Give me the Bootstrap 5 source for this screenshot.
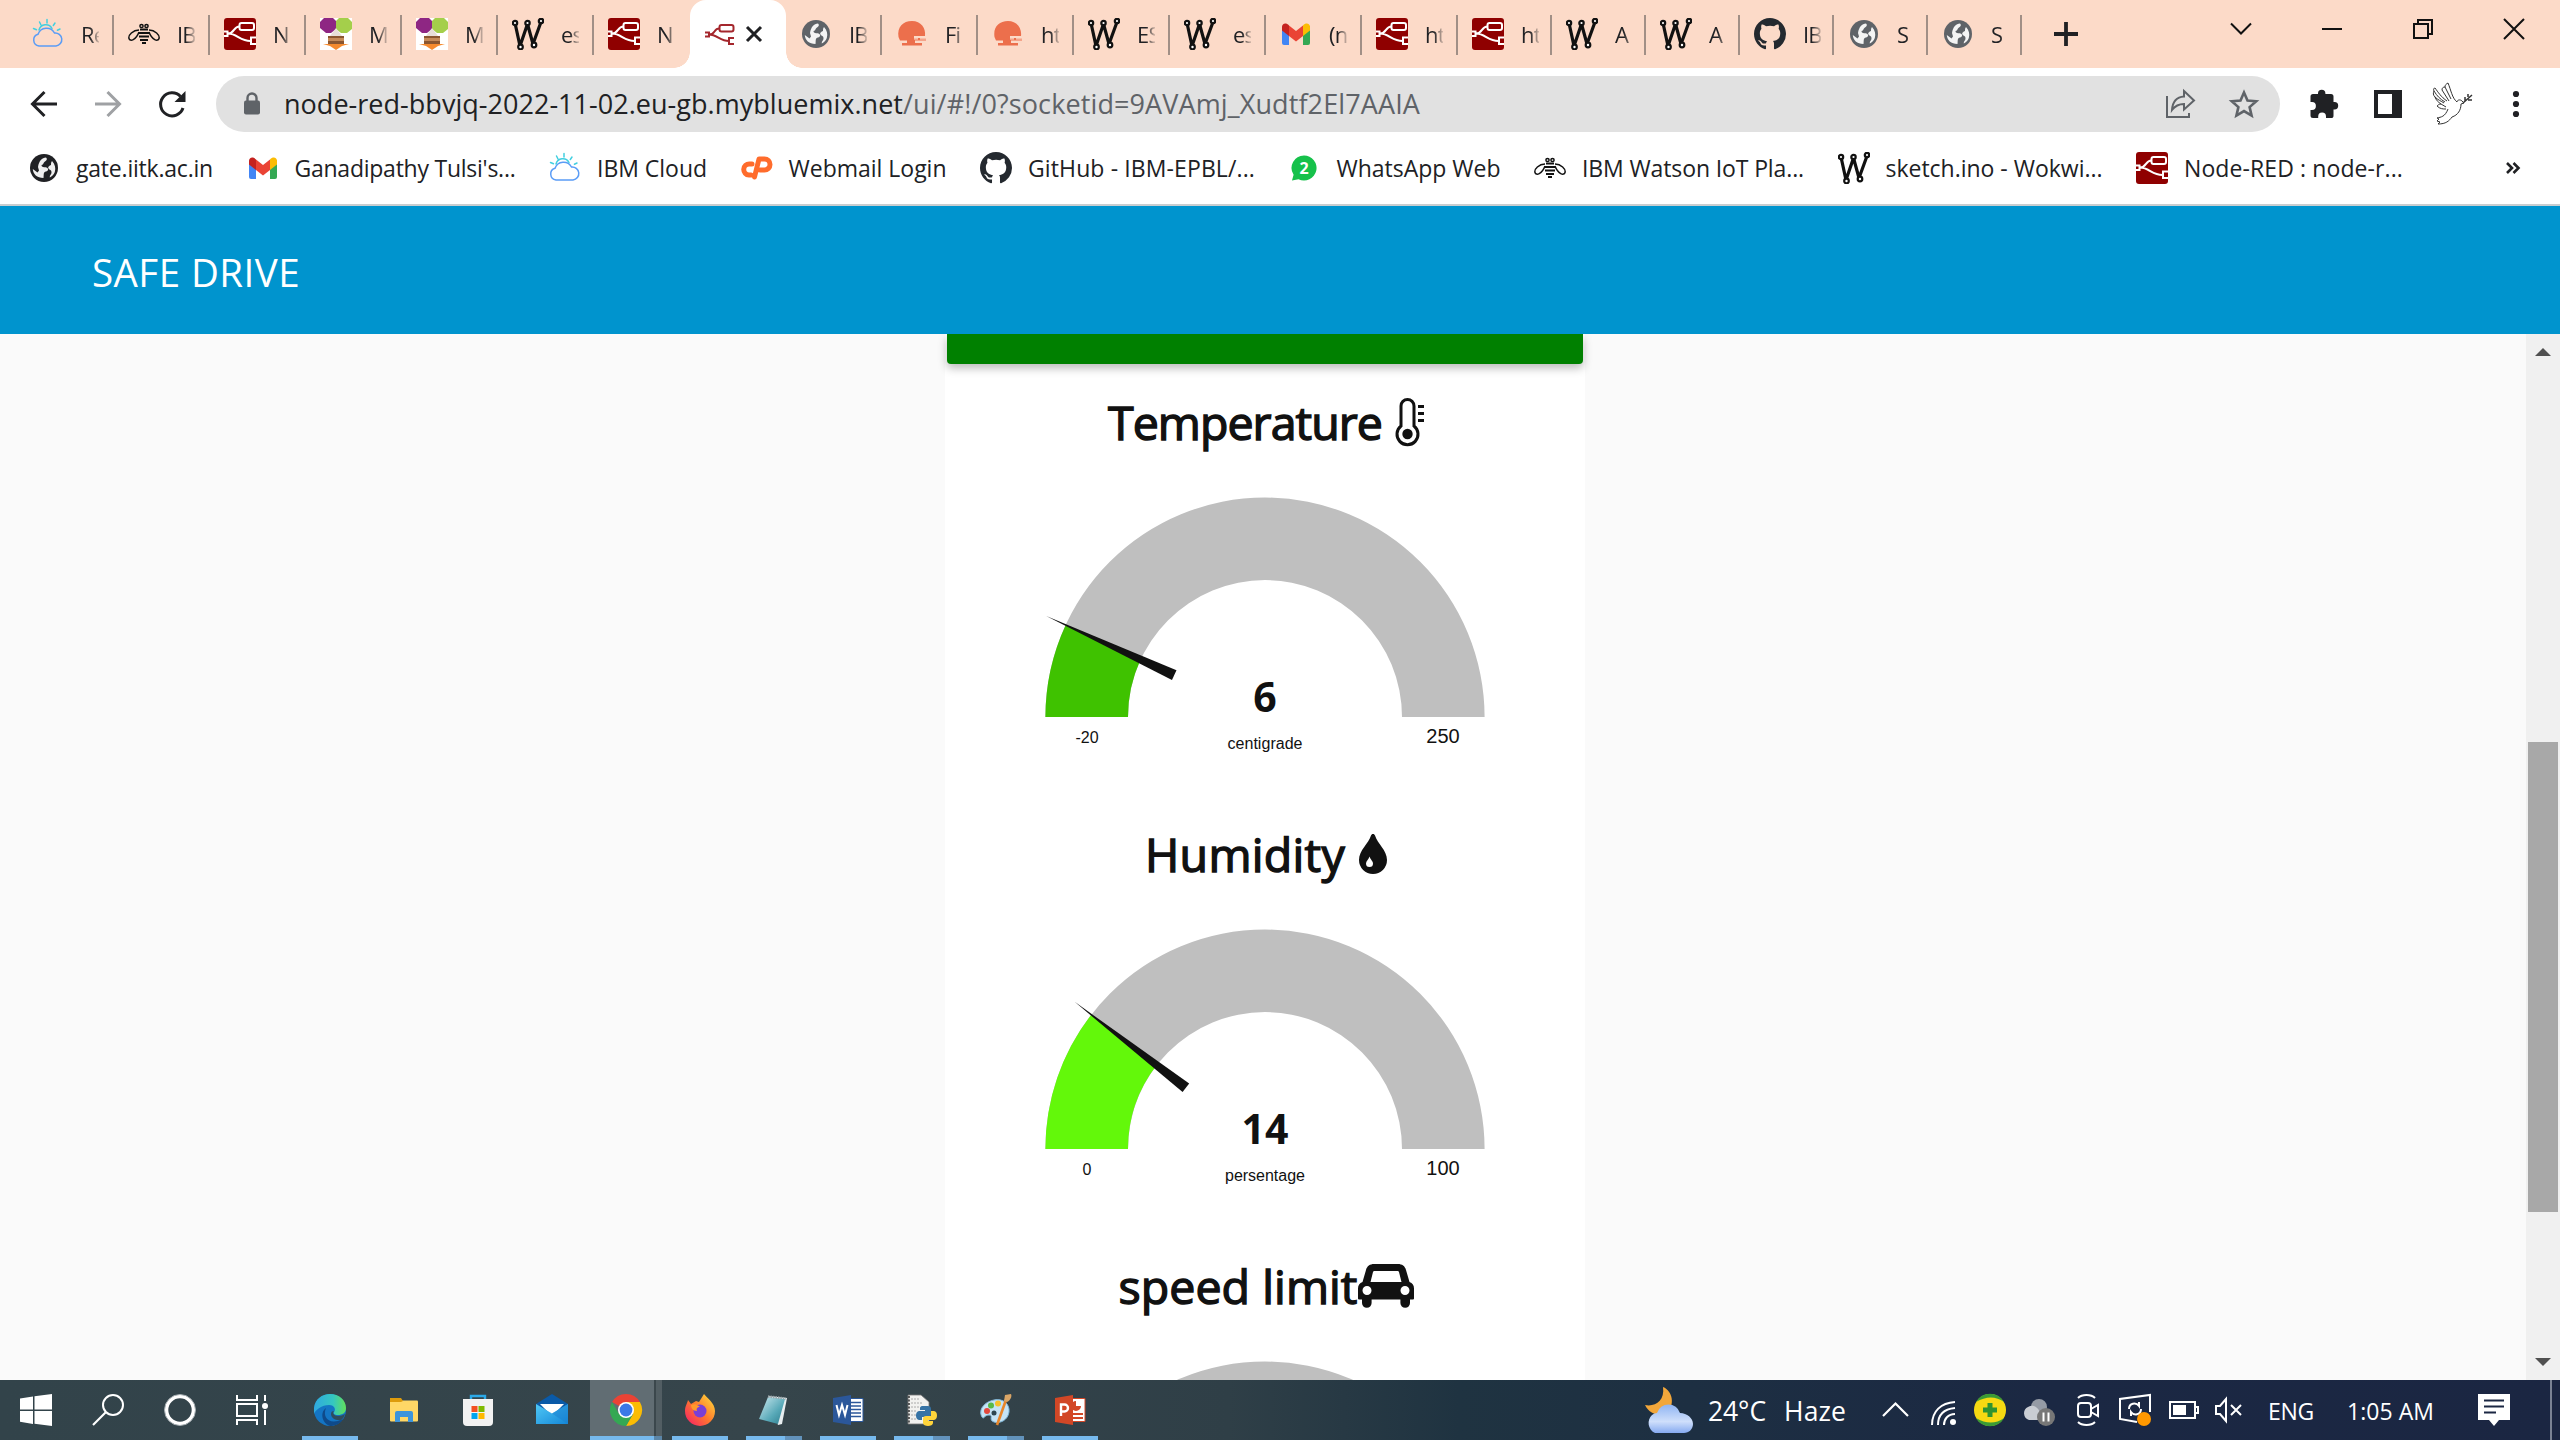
<!DOCTYPE html>
<html lang="en">
<head>
<meta charset="utf-8">
<title>SAFE DRIVE</title>
<link rel="stylesheet" href="https://cdn.jsdelivr.net/npm/bootstrap@5.3.0/dist/css/bootstrap.min.css">
<style>
  html, body { height: 100%; }
  body { font-family: "Open Sans", "Noto Sans", sans-serif; color: #202124; background: #fafafa; overflow: hidden; }
  svg { display: block; flex: none; overflow: visible; }
  .ico { width: 32px; height: 32px; }
  .fit { display: inline-block; white-space: nowrap; }

  /* tab strip */
  .tabstrip { height: 68px; background: #fcdac8; padding-left: 18px; }
  .tabcell { width: 96px; height: 68px; padding-left: 14px; gap: 17px; position: relative; }
  .tabcell.slim { width: 94px; }
  .tabcell::after { content: ""; position: absolute; right: 0; top: 15px; width: 2px; height: 40px; background: #a18f86; }
  .tabcell.nosep::after { display: none; }
  .tabtitle { width: 18px; overflow: hidden; white-space: nowrap; font-size: 22px; letter-spacing: -.8px; line-height: 34px; flex: none;
    -webkit-mask-image: linear-gradient(90deg, #000 50%, transparent 110%); mask-image: linear-gradient(90deg, #000 50%, transparent 110%); }
  .tabactive { width: 96px; height: 68px; background: #fff; border-radius: 16px 16px 0 0; position: relative; padding-left: 14px; gap: 10px; }
  .tabactive::before, .tabactive::after { content: ""; position: absolute; bottom: 0; width: 16px; height: 16px; }
  .tabactive::before { left: -16px; background: radial-gradient(circle at 0 0, transparent 15.5px, #fff 16px); }
  .tabactive::after { right: -16px; background: radial-gradient(circle at 100% 0, transparent 15.5px, #fff 16px); }
  .plusbox { margin-left: 32px; }
  .wincontrols { margin-left: auto; gap: 71px; padding: 0 36px 10px 0; }

  /* toolbar */
  .toolbar { height: 72px; background: #fff; padding: 0 28px; }
  .navicons { width: 188px; gap: 32px; flex: none; }
  .omnibox { width: 2064px; height: 56px; border-radius: 28px; background: #e1e1e1; padding: 0 20px; flex: none; }
  .urltext { font-size: 27px; line-height: 40px; margin-left: 16px; color: #5f6368; }
  .urltext b { font-weight: 400; color: #202124; }
  .boxicons { margin-left: auto; gap: 32px; }
  .extras { padding-left: 28px; gap: 32px; }
  .dove { margin: 0 -4px; }

  /* bookmarks */
  .bookmarks { height: 66px; background: #fff; border-bottom: 2px solid #c8cdd0; padding: 0 40px 9px 28px; font-size: 23px; line-height: 34px; }
  .bm { gap: 16px; margin-right: 33.5px; }
  .more { margin-left: auto; }

  /* dashboard */
  .dashhead { height: 128px; background: #0094ce; color: #fff; padding: 5px 0 0 92px; font-size: 38.5px; }
  .dashbody { height: 1046px; overflow: hidden; background: #fafafa; }
  .panelcol { width: 640px; background: #fff; margin-left: 945px; }
  .greenbar { height: 30px; margin: 0 2px; background: #008000; border-radius: 0 0 4px 4px; box-shadow: 0 4px 10px rgba(0,0,0,.28); }
  .gaugecard { height: 432px; padding-top: 24px; color: #111; }
  .gaugetitle { height: 69px; padding: 0 0 1px 2px; font-size: 46.5px; font-weight: 400; line-height: 66px; }
  .gaugetitle .fit { -webkit-text-stroke: 1.4px #111; }
  .thermo { margin-left: 13px; }
  .drop { margin-left: 14px; }
  .dial text { font-family: "Liberation Sans", sans-serif; fill: #111; text-anchor: middle; }
  .dial .reading { font-family: "Open Sans", "Noto Sans", sans-serif; font-weight: 700; font-size: 41px; }
  .scroller { width: 34px; background: #f0f0f0; margin-left: auto; padding: 14px 2px; }
  .thumb { height: 470px; background: #a8a8a8; margin-top: 386px; }

  /* taskbar */
  .taskbar { height: 60px; background: linear-gradient(90deg, #32434a 0, #36454b 30%, #2f3f47 48%, #1f3341 57%, #1d2f42 66%, #1b2843 80%, #1b2642 100%); color: #fff; }
  .tb { width: 72px; height: 60px; }
  .app { width: 74px; height: 60px; position: relative; }
  .firstapp { margin-left: 5px; }
  .open::after { content: ""; position: absolute; left: 9px; bottom: 0; width: 56px; height: 4px; background: #76b9ed; }
  .multi::after { background: linear-gradient(90deg, #76b9ed 39px, #6292bb 39px); }
  .current { background: linear-gradient(90deg, #616d73 64px, #3b474c 64px, #3b474c 66px, #525e63 66px); width: 72px; margin: 0 1px; }
  .current::after { left: 0; width: 72px; background: linear-gradient(90deg, #76b9ed 64px, #5b86a8 64px); }
  .tray { margin-left: auto; }
  .wtext { font-size: 26.5px; padding-top: 3px; margin-left: 15px; width: 137px; gap: 18px; }
  .trayset { gap: 16px; margin-left: 37px; }
  .ttext { font-size: 23px; padding-top: 2px; }
  .lang { margin-left: 23px; }
  .clock { margin-left: 33px; }
  .notes { margin: 0 39px 0 43px; }
  .peek { width: 10px; height: 60px; border-left: 2px solid #7a8294; }
</style>
</head>
<body class="d-flex flex-column">

<svg width="0" height="0" class="position-absolute">
  <defs>
    <symbol id="i-cloud" viewBox="0 0 32 32"><g fill="none" stroke-width="1.500" stroke-linecap="round"><path stroke="#5a9cf6" d="M7 28a6 6 0 0 1-1-11.700A9 9 0 0 1 22.500 15 6.500 6.500 0 0 1 24 28Z"/><path stroke="#42cfe0" d="M7 12a7 7 0 0 1 13-1.500M15 1.500v3.500M7.500 4l1.500 3M23 5l-1.700 2.500M1.500 10.500l3 1.200M28 11l-2.600 1.200"/></g></symbol>
    <symbol id="i-bee" viewBox="0 0 32 32"><g fill="none" stroke="#111" stroke-width="1.500"><path d="M11 12C5 12 0 17 1 20.500S8 22 11 14M21 12c6 0 11 5 10 8.500S24 22 21 14"/><path stroke-width="2" d="M12 11.500h8M11 15h10M11 18.500h10M12 22h8M14 25h4"/><circle cx="13.500" cy="8" r="1.600"/><circle cx="18.500" cy="8" r="1.600"/></g></symbol>
    <symbol id="i-nr" viewBox="0 0 32 32"><rect width="32" height="32" rx="3" fill="#8f0000"/><g fill="none" stroke="#fff" stroke-width="2"><rect x="15.500" y="5" width="14.500" height="7" rx="2"/><path d="M0 13.500h3.500V18H0M32 19.500h-5v6.500h5M4 15.500C11 15.500 9 8.500 15.500 8.500M4 15.500c9 0 12 7.500 22.500 7.500"/></g></symbol>
    <symbol id="i-nrline" viewBox="0 0 32 32"><g fill="none" stroke="#a4262c" stroke-width="2"><rect x="15.500" y="7" width="14" height="6.500" rx="2"/><path d="M1 14.500h4v4H1M30 20h-5v6h5M5 16.500C12 16.500 9 10.500 15.500 10.500M5 16.500c8 0 11 6.500 20 6.500"/></g></symbol>
    <symbol id="i-mec" viewBox="0 0 32 32"><rect width="32" height="32" fill="#fff"/><path fill="#8e2683" d="M4 0h9l3 3v8l-5 4H6l-6-5V4z"/><path fill="#a4cf4b" d="M19 0h9l4 4v7l-5 4h-6l-5-4V3z"/><path fill="#e8dfd8" d="M16 10l6 8H10z"/><path fill="#8a5630" d="M8 18h16v8H8z"/><path fill="#c68a58" d="M8 20h16v3H8z"/><path fill="#f58a2e" d="M3 26h26l-7 2-6 4-6-4z"/></symbol>
    <symbol id="i-w" viewBox="0 0 32 32"><g fill="none" stroke="#111" stroke-width="3.200" stroke-linejoin="round"><path d="M3 5l5 23L15.500 6 21 26l8-22"/></g><g fill="#fff" stroke="#111" stroke-width="2.200"><circle cx="3" cy="5" r="2.200"/><circle cx="15.500" cy="5" r="2.200"/><circle cx="29" cy="3" r="2.200"/><circle cx="8.500" cy="29" r="2.300"/><circle cx="22" cy="27" r="2.300"/></g></symbol>
    <symbol id="i-globe" viewBox="0 0 32 32"><circle cx="16" cy="16" r="14" fill="currentColor"/><path fill="#fff" d="M18 5.500c1.500 1 1 3-1 4-2 1-1 3-3.500 3.500 0 2.500 3 2 5 2.500 2.500 1 2 3.500-.5 4-3 .5-2 3.500-2.500 6.500C9 26 5 22 4.800 17l4.700 3.500 1.500-2-1-3.500C11 9 14 5.500 18 5.500Z" opacity=".93"/><path fill="#fff" d="M24 9c3 3 4 7 2.800 11-.8 2.500-2.800 4.500-5 5.500 0-3 1.700-2.500 1.700-5.500 0-2-2-2-3-3.500s1-3 2.500-3.500c0-2 0-2.500 1-4z" opacity=".93"/></symbol>
    <symbol id="i-sun" viewBox="0 0 32 32"><path fill="#ec6f4c" d="M2.500 19C1 9 7 3 16 3s14 7 13 15H18v2h12v2.500H19V25h7v2.500H6V25h5v-2.500H4z"/><path stroke="#fcdac8" stroke-width="1.300" d="M18 20.800h4M24 20.800h6"/></symbol>
    <symbol id="i-gmail" viewBox="0 0 32 32"><path fill="#4285f4" d="M2 8v17a2 2 0 0 0 2 2h5V13z"/><path fill="#34a853" d="M30 8v17a2 2 0 0 1-2 2h-5V13z"/><path fill="#fbbc04" d="M23 7.500c3-3.500 7-2 7 1.500v3.500l-7 5.500z"/><path fill="#c5221f" d="M9 7.500C6 4 2 5.500 2 9v3.500L9 18z"/><path fill="#ea4335" d="M9 7.500l7 5.500 7-5.500V18l-7 5.500L9 18z"/></symbol>
    <symbol id="i-gh" viewBox="0 0 16 16"><path fill="#24292f" d="M8 0C3.580 0 0 3.580 0 8c0 3.540 2.290 6.530 5.470 7.590.4.070.55-.17.55-.38 0-.19-.01-.82-.01-1.490-2.010.37-2.530-.49-2.690-.94-.09-.23-.48-.94-.82-1.130-.28-.15-.68-.52-.01-.53.63-.01 1.080.58 1.230.82.72 1.210 1.870.87 2.330.66.070-.52.28-.87.51-1.070-1.780-.2-3.640-.89-3.640-3.950 0-.87.31-1.590.82-2.150-.08-.2-.36-1.020.08-2.120 0 0 .67-.21 2.200.82.64-.18 1.320-.27 2-.27s1.360.09 2 .27c1.530-1.040 2.200-.82 2.200-.82.44 1.100.16 1.920.08 2.120.51.56.82 1.270.82 2.150 0 3.070-1.870 3.750-3.650 3.950.29.25.54.73.54 1.480 0 1.070-.01 1.930-.01 2.200 0 .21.15.46.55.38A8.010 8.010 0 0 0 16 8c0-4.420-3.580-8-8-8"/></symbol>
    <symbol id="i-cp" viewBox="0 0 32 32"><g fill="none" stroke="#ff6c2c" stroke-width="5" stroke-linecap="round" stroke-linejoin="round"><path d="M11 12H8.500a5.500 5.500 0 0 0-.5 11H10M13.500 25l4.500-18h5.500a5.300 5.300 0 0 1 0 11H19"/></g></symbol>
    <symbol id="i-wa" viewBox="0 0 32 32"><path fill="#16c14b" d="M15 3.500a12.500 12.500 0 1 1-5.500 23.700L3 28.500l1.600-5.700A12.500 12.500 0 0 1 15 3.500Z"/><text x="15" y="22" font-size="16" font-weight="700" fill="#fff" text-anchor="middle">2</text></symbol>
    <symbol id="i-lens" viewBox="0 0 32 32"><path d="M1 31 14 18" stroke="#fff" stroke-width="2.200"/><circle cx="21" cy="11" r="10" fill="none" stroke="#fff" stroke-width="2"/></symbol>
    <linearGradient id="edgeA" x1="0" y1="0" x2="1" y2="0"><stop offset="0" stop-color="#2fa8e0"/><stop offset=".6" stop-color="#35c7c0"/><stop offset="1" stop-color="#62e05a"/></linearGradient>
    <linearGradient id="mailA" x1="0" y1="0" x2="1" y2="1"><stop offset="0" stop-color="#50c8f5"/><stop offset="1" stop-color="#1487d8"/></linearGradient>
    <linearGradient id="foxA" x1="1" y1="0" x2="0" y2="1"><stop offset="0" stop-color="#ffe63c"/><stop offset=".5" stop-color="#ff7a2d"/><stop offset="1" stop-color="#f5156c"/></linearGradient>
    <linearGradient id="padA" x1="0" y1="0" x2="1" y2="1"><stop offset="0" stop-color="#cfeaf0"/><stop offset=".6" stop-color="#58a9b8"/><stop offset="1" stop-color="#2b7b8c"/></linearGradient>
    <linearGradient id="skyA" x1="0" y1="0" x2="0" y2="1"><stop offset="0" stop-color="#8fb4f3"/><stop offset=".6" stop-color="#cfdffb"/><stop offset="1" stop-color="#86aaf0"/></linearGradient>
  </defs>
</svg>

<!-- Browser tabs -->
<header class="tabstrip d-flex align-items-center">
  <div class="tabcell d-flex align-items-center"><svg class="ico"><use href="#i-cloud"/></svg><span class="tabtitle">Re</span></div>
  <div class="tabcell d-flex align-items-center"><svg class="ico"><use href="#i-bee"/></svg><span class="tabtitle">IB</span></div>
  <div class="tabcell d-flex align-items-center"><svg class="ico"><use href="#i-nr"/></svg><span class="tabtitle">N</span></div>
  <div class="tabcell d-flex align-items-center"><svg class="ico"><use href="#i-mec"/></svg><span class="tabtitle">M</span></div>
  <div class="tabcell d-flex align-items-center"><svg class="ico"><use href="#i-mec"/></svg><span class="tabtitle">M</span></div>
  <div class="tabcell d-flex align-items-center"><svg class="ico"><use href="#i-w"/></svg><span class="tabtitle">es</span></div>
  <div class="tabcell nosep d-flex align-items-center"><svg class="ico"><use href="#i-nr"/></svg><span class="tabtitle">N</span></div>
  <div class="tabactive d-flex align-items-center"><svg class="ico"><use href="#i-nrline"/></svg>
    <svg width="16" height="16" viewBox="0 0 16 16"><path d="M1 1l14 14M15 1L1 15" stroke="#202124" stroke-width="3"/></svg></div>
  <div class="tabcell d-flex align-items-center"><svg class="ico" color="#5f6368"><use href="#i-globe"/></svg><span class="tabtitle">IB</span></div>
  <div class="tabcell d-flex align-items-center"><svg class="ico"><use href="#i-sun"/></svg><span class="tabtitle">Fi</span></div>
  <div class="tabcell d-flex align-items-center"><svg class="ico"><use href="#i-sun"/></svg><span class="tabtitle">ht</span></div>
  <div class="tabcell d-flex align-items-center"><svg class="ico"><use href="#i-w"/></svg><span class="tabtitle">ES</span></div>
  <div class="tabcell d-flex align-items-center"><svg class="ico"><use href="#i-w"/></svg><span class="tabtitle">es</span></div>
  <div class="tabcell d-flex align-items-center"><svg class="ico"><use href="#i-gmail"/></svg><span class="tabtitle">(n</span></div>
  <div class="tabcell d-flex align-items-center"><svg class="ico"><use href="#i-nr"/></svg><span class="tabtitle">ht</span></div>
  <div class="tabcell slim d-flex align-items-center"><svg class="ico"><use href="#i-nr"/></svg><span class="tabtitle">ht</span></div>
  <div class="tabcell slim d-flex align-items-center"><svg class="ico"><use href="#i-w"/></svg><span class="tabtitle">A</span></div>
  <div class="tabcell slim d-flex align-items-center"><svg class="ico"><use href="#i-w"/></svg><span class="tabtitle">A</span></div>
  <div class="tabcell slim d-flex align-items-center"><svg class="ico"><use href="#i-gh"/></svg><span class="tabtitle">IB</span></div>
  <div class="tabcell slim d-flex align-items-center"><svg class="ico" color="#5f6368"><use href="#i-globe"/></svg><span class="tabtitle">S</span></div>
  <div class="tabcell slim d-flex align-items-center"><svg class="ico" color="#5f6368"><use href="#i-globe"/></svg><span class="tabtitle">S</span></div>
  <svg class="plusbox" width="24" height="24" viewBox="0 0 24 24"><path d="M12 0v24M0 12h24" stroke="#202124" stroke-width="3.800"/></svg>
  <div class="wincontrols d-flex align-items-center">
    <svg width="20" height="20" viewBox="0 0 20 20"><path d="M0 4.500l10 10 10-10" fill="none" stroke="#111" stroke-width="2"/></svg>
    <svg width="20" height="20" viewBox="0 0 20 20"><path d="M0 10h20" stroke="#111" stroke-width="2"/></svg>
    <svg width="20" height="20" viewBox="0 0 20 20"><path d="M5 4V1h14v14h-3M1 5h14v14H1z" fill="none" stroke="#111" stroke-width="2"/></svg>
    <svg width="20" height="20" viewBox="0 0 20 20"><path d="M0 0l20 20M20 0L0 20" stroke="#111" stroke-width="2"/></svg>
  </div>
</header>

<!-- Address bar -->
<div class="toolbar d-flex align-items-center">
  <div class="navicons d-flex align-items-center">
    <svg class="ico" viewBox="0 0 32 32"><path d="M29 16H5M16.500 4L4.500 16l12 12" fill="none" stroke="#202124" stroke-width="3"/></svg>
    <svg class="ico" viewBox="0 0 32 32"><path d="M3 16h24M15.500 4l12 12-12 12" fill="none" stroke="#9fa1a4" stroke-width="3"/></svg>
    <svg class="ico" viewBox="0 0 32 32"><path d="M27 20A11.500 11.500 0 1 1 24.500 8.500" fill="none" stroke="#202124" stroke-width="3"/><path fill="#202124" d="M29.500 3v11h-11z"/></svg>
  </div>
  <div class="omnibox d-flex align-items-center">
    <svg class="ico" viewBox="0 0 32 32"><rect x="8" y="12.500" width="16" height="14" rx="2" fill="#5f6368"/><path d="M11.500 13V10a4.500 4.500 0 0 1 9 0v3" fill="none" stroke="#5f6368" stroke-width="2.400"/></svg>
    <span class="urltext"><span class="fit" data-w="619"><b>node-red-bbvjq-2022-11-02.eu-gb.mybluemix.net</b></span><span class="fit" data-w="517">/ui/#!/0?socketid=9AVAmj_Xudtf2El7AAIA</span></span>
    <div class="boxicons d-flex">
      <svg class="ico" viewBox="0 0 32 32"><g fill="none" stroke="#5f6368" stroke-width="2"><path d="M3 8v21h22v-4"/><path d="M20 3l10 9.500L20 21.500V16c-5 0-9 2-12 6 .5-7 4-13 12-13.500z"/></g></svg>
      <svg class="ico" viewBox="0 0 32 32"><path d="M16 4.500l3.500 8 8.700.8-6.600 5.800 2 8.500L16 23.100l-7.600 4.500 2-8.500-6.600-5.800 8.700-.8z" fill="none" stroke="#5f6368" stroke-width="2.600"/></svg>
    </div>
  </div>
  <div class="extras d-flex align-items-center">
    <svg class="ico" viewBox="0 0 32 32"><path fill="#202124" d="M10 5.500a3.700 3.700 0 0 1 7.400 0V6H23a2.500 2.500 0 0 1 2.500 2.500V14h1a3.700 3.700 0 0 1 0 7.400h-1v6A2.500 2.500 0 0 1 23 30h-5v-1.500a3.900 3.900 0 0 0-7.800 0V30H5a2.500 2.500 0 0 1-2.500-2.500v-5.600H4a3.900 3.900 0 0 0 0-7.800H2.500V8.500A2.500 2.500 0 0 1 5 6h5z"/></svg>
    <svg class="ico" viewBox="0 0 32 32"><path fill="#202124" fill-rule="evenodd" d="M2 2h28v28H2zm4 4v20h14V6z"/></svg>
    <svg class="dove" width="40" height="44" viewBox="0 0 40 44"><g fill="none" stroke="#333" stroke-width="1"><path d="M25 20C20 16 19 8 16 1c-2 1-3 2-3 4-2 0-3 1-3 3M13 5l6 12M10 8l7 11M9 22C6 20 4 18 3 15c-2-2-2-4-1-6C1 7 2 6 3 6M3 6c3 4 6 9 12 13M2 9c3 5 6 8 11 11M3 15c3 3 6 4 9 6M9 22c-2 0-3 1-4 2 3 3 6 3 9 3"/><path d="M25 20c0-2 3-3 5-1l2 2-3 1c0 6-3 11-9 13-3 4-6 7-14 7l2-2-3-1 2-2-2-1c4-1 8-1 11-9M9 22l5 3"/><path stroke-width="1.500" d="M31 21l9-8M33 19v-4M36 18l4 0M36 15l0-3"/></g></svg>
    <svg class="ico" viewBox="0 0 32 32"><g fill="#202124"><circle cx="16" cy="6" r="3.100"/><circle cx="16" cy="16" r="3.100"/><circle cx="16" cy="26" r="3.100"/></g></svg>
  </div>
</div>

<!-- Bookmarks -->
<nav class="bookmarks d-flex align-items-center">
  <div class="bm d-flex align-items-center"><svg class="ico"><use href="#i-globe"/></svg><span class="fit" data-w="137">gate.iitk.ac.in</span></div>
  <div class="bm d-flex align-items-center"><svg class="ico"><use href="#i-gmail"/></svg><span class="fit" data-w="221">Ganadipathy Tulsi's...</span></div>
  <div class="bm d-flex align-items-center"><svg class="ico"><use href="#i-cloud"/></svg><span class="fit" data-w="110">IBM Cloud</span></div>
  <div class="bm d-flex align-items-center"><svg class="ico"><use href="#i-cp"/></svg><span class="fit" data-w="158">Webmail Login</span></div>
  <div class="bm d-flex align-items-center"><svg class="ico"><use href="#i-gh"/></svg><span class="fit" data-w="227">GitHub - IBM-EPBL/...</span></div>
  <div class="bm d-flex align-items-center"><svg class="ico"><use href="#i-wa"/></svg><span class="fit" data-w="164">WhatsApp Web</span></div>
  <div class="bm d-flex align-items-center"><svg class="ico"><use href="#i-bee"/></svg><span class="fit" data-w="222">IBM Watson IoT Pla...</span></div>
  <div class="bm d-flex align-items-center"><svg class="ico"><use href="#i-w"/></svg><span class="fit" data-w="217">sketch.ino - Wokwi...</span></div>
  <div class="bm d-flex align-items-center"><svg class="ico"><use href="#i-nr"/></svg><span class="fit" data-w="219">Node-RED : node-r...</span></div>
  <svg class="more" width="14" height="12" viewBox="0 0 14 12"><path d="M1 1l5 5-5 5M7.500 1l5 5-5 5" fill="none" stroke="#202124" stroke-width="2.600"/></svg>
</nav>

<!-- Dashboard -->
<div class="dashhead d-flex align-items-center"><span class="fit" data-w="208">SAFE DRIVE</span></div>
<main class="dashbody d-flex">
  <section class="panelcol">
    <div class="greenbar"></div>
    <div class="gaugecard">
      <div class="gaugetitle d-flex justify-content-center align-items-center">
        <span class="fit" data-w="274">Temperature</span>
        <svg class="thermo" width="29" height="48" viewBox="0 0 29 48"><path d="M6 28V8a6.500 6.500 0 0 1 13 0v20a10.500 10.500 0 1 1-13 0z" fill="none" stroke="#111" stroke-width="3"/><circle cx="12.500" cy="36" r="5.200" fill="#111"/><path d="M23 8.500h6M23 15.500h6M23 22.500h6" stroke="#111" stroke-width="3"/></svg>
      </div>
      <svg class="dial" width="640" height="339" viewBox="0 0 640 339">
        <path fill="#bfbfbf" d="M100.400 260A219.600 219.600 0 0 1 539.600 260H457A137 137 0 0 0 183 260Z"/>
        <path fill="#3fc200" d="M100.400 260A219.600 219.600 0 0 1 120.700 167.900L195.600 202.500A137 137 0 0 0 183 260Z"/>
        <path fill="#111" transform="rotate(24.800 320 260)" d="M79 260L220 254.600V265.400Z"/>
        <text class="reading" x="320" y="255">6</text><text x="320" y="292" font-size="16" textLength="75">centigrade</text>
        <text x="142" y="286" font-size="16">-20</text><text x="498" y="286" font-size="20">250</text>
      </svg>
    </div>
    <div class="gaugecard">
      <div class="gaugetitle d-flex justify-content-center align-items-center">
        <span class="fit" data-w="200">Humidity</span>
        <svg class="drop" width="28" height="40" viewBox="0 0 28 40"><path fill="#111" d="M14 0c1 0 1.700.6 2 1.500C18.500 10 28 16 28 26a14 14 0 0 1-28 0C0 16 9.500 10 12 1.500 12.300.6 13 0 14 0z"/><path fill="#fff" d="M10.500 22.500c.8 3 3.500 4.500 3.500 7a3.500 3.500 0 0 1-7 0c0-2.500 2.700-4 3.500-7z"/></svg>
      </div>
      <svg class="dial" width="640" height="339" viewBox="0 0 640 339">
        <path fill="#bfbfbf" d="M100.400 260A219.600 219.600 0 0 1 539.600 260H457A137 137 0 0 0 183 260Z"/>
        <path fill="#63f80a" d="M100.400 260A219.600 219.600 0 0 1 146.200 125.700L211.600 176.200A137 137 0 0 0 183 260Z"/>
        <path fill="#111" transform="rotate(37.700 320 260)" d="M79 260L220 254.600V265.400Z"/>
        <text class="reading" x="320" y="255">14</text><text x="320" y="292" font-size="16" textLength="80">persentage</text>
        <text x="142" y="286" font-size="16">0</text><text x="498" y="286" font-size="20">100</text>
      </svg>
    </div>
    <div class="gaugecard">
      <div class="gaugetitle d-flex justify-content-center align-items-center">
        <span class="fit" data-w="239">speed limit</span>
        <svg width="56" height="44" viewBox="0 0 56 44"><path fill="#111" fill-rule="evenodd" d="M16 0h24c4 0 7 2 8 6l3.500 12c3 1 4.500 3.500 4.500 6.500v10a1 1 0 0 1-1 1h-3V39a4.800 4.800 0 0 1-9.600 0v-3.500H13.600V39A4.800 4.800 0 0 1 4 39v-3.500H1a1 1 0 0 1-1-1v-10C0 21.500 1.500 19 4.500 18L8 6c1-4 4-6 8-6zm.5 7a1.500 1.500 0 0 0-1.500 1L12.500 18h31L41 8a1.500 1.500 0 0 0-1.500-1zM9 22a4.500 4.500 0 1 0 0 9 4.500 4.500 0 0 0 0-9zm38 0a4.500 4.500 0 1 0 0 9 4.500 4.500 0 0 0 0-9z"/></svg>
      </div>
      <svg class="dial" width="640" height="339" viewBox="0 0 640 339"><path fill="#bfbfbf" d="M100.400 260A219.600 219.600 0 0 1 539.600 260H457A137 137 0 0 0 183 260Z"/></svg>
    </div>
  </section>
  <aside class="scroller d-flex flex-column">
    <svg width="30" height="8" viewBox="0 0 30 8"><path fill="#505050" d="M15 0l8 8H7z"/></svg>
    <div class="thumb"></div>
    <svg class="mt-auto" width="30" height="8" viewBox="0 0 30 8"><path fill="#505050" d="M7 0h16l-8 8z"/></svg>
  </aside>
</main>

<!-- Taskbar -->
<footer class="taskbar d-flex align-items-center">
  <div class="tb d-flex align-items-center justify-content-center"><svg class="ico" viewBox="0 0 32 32"><path fill="#fff" d="M0 4.500l13-2v13H0zM14.500 2.300L32 0v15.500H14.500zM0 17h13v13L0 27.800zM14.500 17H32v15l-17.500-2.300z"/></svg></div>
  <div class="tb d-flex align-items-center justify-content-center"><svg class="ico"><use href="#i-lens"/></svg></div>
  <div class="tb d-flex align-items-center justify-content-center"><svg class="ico" viewBox="0 0 32 32"><circle cx="16" cy="16" r="13.500" fill="none" stroke="#fff" stroke-width="3.600"/><circle cx="16" cy="16" r="15.500" fill="none" stroke="#a9b1b5" stroke-width="1"/></svg></div>
  <div class="tb d-flex align-items-center justify-content-center"><svg class="ico" viewBox="0 0 32 32"><g fill="none" stroke="#fff" stroke-width="2"><path d="M1 1v5h20V1M1 31v-5h20v5M1 10h20v12H1zM29 1v6M29 16v15"/></g><circle cx="29" cy="12" r="3" fill="#fff"/></svg></div>
  <div class="app firstapp open d-flex align-items-center justify-content-center"><svg class="ico" viewBox="0 0 32 32"><circle cx="16" cy="16" r="16" fill="#1475c4"/><path fill="url(#edgeA)" d="M0 14C1 5 8 0 16 0c9 0 16 6 16 14 0 5-4 7-8 7-4 0-5-2-4-3 2-2 1-7-5-7-7 0-14 5-15 9z"/><path fill="#0f4a8a" d="M12 14c-4 9 3 18 17 11-3 5-8 7-13 7-7-2-11-13-4-18z"/><path fill="#34454b" d="M20 17c-2 2 0 5 4 5 3 0 5-1 7-2-1 3-2 5-4 6-5 1-10-2-10-6 0-2 1-3 3-3z" opacity=".85"/></svg></div>
  <div class="app d-flex align-items-center justify-content-center"><svg class="ico" viewBox="0 0 32 32"><rect x="2" y="6.500" width="28" height="21" rx="1" fill="#ffd766"/><path fill="#dd9b0c" d="M2 4h11l2 3-2 1H2z"/><path fill="#3c94dc" d="M7 28v-9a2 2 0 0 1 2-2h14a2 2 0 0 1 2 2v9h-5v-5h-8v5z"/></svg></div>
  <div class="app d-flex align-items-center justify-content-center"><svg class="ico" viewBox="0 0 32 32"><path d="M9 6V2h14v4" fill="none" stroke="#2ba9e8" stroke-width="2.400"/><path fill="#f2f2f2" d="M1 5h30v23a4 4 0 0 1-4 4H5a4 4 0 0 1-4-4z"/><path fill="#f25022" d="M9.500 12h6v6h-6z"/><path fill="#7fba00" d="M16.500 12h6v6h-6z"/><path fill="#00a4ef" d="M9.500 19h6v6h-6z"/><path fill="#ffb900" d="M16.500 19h6v6h-6z"/></svg></div>
  <div class="app d-flex align-items-center justify-content-center"><svg class="ico" viewBox="0 0 32 32"><path fill="#0a5aa8" d="M16 0l16 10v8H0v-8z"/><path fill="#fff" d="M4 10h24L16 22z"/><path fill="url(#mailA)" d="M0 10l16 9.500L32 10v20H0z"/><path fill="#1a7fd0" d="M32 10v20L16 19.500z" opacity=".5"/></svg></div>
  <div class="app open current d-flex align-items-center justify-content-center"><svg class="ico" viewBox="0 0 32 32"><path fill="#ea4335" d="M16 16L2.100 8A16 16 0 0 1 29.900 8z"/><path fill="#fbbc04" d="M16 8h13.900A16 16 0 0 1 16 32l7-12z"/><path fill="#34a853" d="M2.100 8A16 16 0 0 0 16 32l7-12H9z"/><circle cx="16" cy="16" r="8" fill="#fff"/><circle cx="16" cy="16" r="6.400" fill="#3b78e7"/></svg></div>
  <div class="app open d-flex align-items-center justify-content-center"><svg class="ico" viewBox="0 0 32 32"><path fill="url(#foxA)" d="M4 6l3 4 5-3 3 1 5-8c3 4 11 9 11 17a15 15 0 0 1-30 0C1 12 3 10 4 6z"/><circle cx="16" cy="17" r="6.500" fill="#7a3fd6"/><path fill="#ff9a2b" d="M7 11c4-2 7 0 9 2-3 0-4 2-3 4-4 0-6-3-6-6z"/></svg></div>
  <div class="app open multi d-flex align-items-center justify-content-center"><svg class="ico" viewBox="0 0 32 32"><path fill="#e8eef0" d="M10 2l19 2-5 26-4 1z"/><path fill="url(#padA)" d="M10 3l17 2-7 25L1 25z"/><path d="M10 2.500l18 2" stroke="#98a4a8" stroke-width="2.500" stroke-dasharray="1.500 1"/></svg></div>
  <div class="app open d-flex align-items-center justify-content-center"><svg class="ico" viewBox="0 0 32 32"><path fill="#fff" stroke="#2b579a" d="M17 4.500h14v23H17z"/><path d="M19 8.500h10M19 12h10M19 15.500h10M19 19h10M19 22.500h10" stroke="#2b579a" stroke-width="1.600"/><path fill="#2b579a" d="M1 4l18-3v30L1 28z"/><path d="M4.500 11l2.500 10 3-10 3 10 2.500-10" fill="none" stroke="#fff" stroke-width="2"/></svg></div>
  <div class="app open multi d-flex align-items-center justify-content-center"><svg class="ico" viewBox="0 0 32 32"><path fill="#f1f1ef" stroke="#777" stroke-width=".8" d="M2 1h13l8 7v22H2z"/><path stroke="#aaa" stroke-dasharray="2 1" d="M5 5h9M5 9h12M5 13h9M5 17h6M5 21h6M5 25h6"/><path stroke="#333" stroke-width="1.500" stroke-dasharray="2 1.500" d="M3 2v28"/><path fill="#3673a5" d="M16 12h6a3 3 0 0 1 3 3v5a3 3 0 0 1-3 3h-6v3h-3c-4 0-4-9 0-9h6v-1h-5v-2c0-1 1-2 2-2z"/><path fill="#ffd43b" d="M25 17h3c4 0 4 9 0 9h-6v1h5v2c0 4-10 4-10 0v-4a3 3 0 0 1 3-3h5z"/></svg></div>
  <div class="app open multi d-flex align-items-center justify-content-center"><svg class="ico" viewBox="0 0 32 32"><path fill="#c5e3f5" stroke="#7fb6d8" d="M14 6c9-2 16 4 15 12S20 30 14 28s0-7-5-7-5 5-7 2C-2 16 4 8 14 6z"/><circle cx="7" cy="17" r="3" fill="#e2483d"/><circle cx="11" cy="11.500" r="3" fill="#57b947"/><circle cx="18" cy="9.500" r="3" fill="#f5c02c"/><circle cx="14" cy="19" r="2.500" fill="#2d4651"/><path d="M17 31l9-25" stroke="#e8862a" stroke-width="2.600"/><path fill="#d9a566" d="M24 7l1-6 6-1c1 2 0 6-4 8z"/></svg></div>
  <div class="app open d-flex align-items-center justify-content-center"><svg class="ico" viewBox="0 0 32 32"><path fill="#fff" stroke="#d24726" d="M17 4.500h14v23H17z"/><path fill="#d24726" d="M22 7a5 5 0 1 0 5 5h-5zM19 19h10v2H19zM19 23h10v2H19z"/><path fill="#d24726" d="M1 4l18-3v30L1 28z"/><path d="M7 22V10.500h3.500a3.500 3.500 0 0 1 0 7H7" fill="none" stroke="#fff" stroke-width="2.400"/></svg></div>

  <div class="tray d-flex align-items-center">
    <svg width="48" height="46" viewBox="0 0 48 46"><path fill="#f2a73b" d="M18 0c10 4 12 18 4 26-6 4-17 2-22-8 10 2 20-4 18-18z"/><path fill="url(#skyA)" d="M10 46a11 11 0 0 1-3-18 8 8 0 0 1 5-2 12 12 0 0 1 23 0c7 0 13 5 13 11 0 5-4 9-9 9z"/></svg>
    <div class="wtext d-flex"><span class="fit" data-w="58">24°C</span><span class="fit" data-w="62">Haze</span></div>
    <div class="trayset d-flex align-items-center">
      <svg width="27" height="32" viewBox="0 0 27 32"><path d="M1 22L13.500 9.500 26 22" fill="none" stroke="#fff" stroke-width="2.200"/></svg>
      <svg class="ico" viewBox="0 0 32 32"><g fill="none" stroke="#fff" stroke-width="2"><path d="M7 31C7 17 16 9 30 8M13 31c0-10 6-16 17-17M19 31c0-6 4-11 11-11"/></g><circle cx="28" cy="28" r="3" fill="#fff"/></svg>
      <svg class="ico" viewBox="0 0 32 32"><circle cx="17" cy="16" r="16" fill="#f6d912"/><path fill="#3b9b35" d="M3 8A16 16 0 0 1 31 8C23 2 13 2 3 8zM31 24A16 16 0 0 1 3 24c10 6 20 6 28 0z"/><path d="M17 9v14M10 16h14" stroke="#2f9330" stroke-width="5"/></svg>
      <svg class="ico" viewBox="0 0 32 32"><circle cx="18" cy="13" r="8" fill="#959ba5"/><path fill="#c9cdd3" d="M8 26a7 7 0 0 1-1-13c7-4 12 2 15 13z"/><circle cx="25" cy="23" r="9" fill="#777"/><path d="M22.500 18.500v9M27.500 18.500v9" stroke="#fff" stroke-width="2"/></svg>
      <svg class="ico" viewBox="0 0 32 32"><g fill="none" stroke="#fff" stroke-width="2"><rect x="9" y="9" width="13" height="14" rx="3"/><path d="M22 15l7-4v11l-7-4M9 4c4-4 13-4 17 0M9 28c4 4 13 4 17 0"/></g></svg>
      <svg class="ico" viewBox="0 0 32 32"><path d="M20 28L3 25V5l30-4v17" fill="none" stroke="#fff" stroke-width="2"/><path d="M12 15c0-6 7-7 10-3V8M24 15c0 6-7 7-10 3v4" fill="none" stroke="#fff" stroke-width="2"/><circle cx="27" cy="25" r="7" fill="#ff9800"/></svg>
      <svg class="ico" viewBox="0 0 32 32"><path d="M5 8h25v16H5zM30 13h3v6h-3" fill="none" stroke="#fff" stroke-width="2"/><path fill="#fff" d="M8 11h13v10H8z"/></svg>
      <svg class="ico" viewBox="0 0 32 32"><path d="M3 12h4l6-7v22l-6-7H3zM18 11l10 10M28 11L18 21" fill="none" stroke="#fff" stroke-width="2"/></svg>
    </div>
    <span class="fit ttext lang" data-w="46">ENG</span>
    <span class="fit ttext clock" data-w="87">1:05 AM</span>
    <svg class="notes" width="34" height="32" viewBox="0 0 34 32"><path fill="#fff" d="M1 0h32v26H22l-5 6-5-6H1z"/><path d="M7 6.500h20M7 12.500h20M7 18.500h12" stroke="#1b2743" stroke-width="2.200"/></svg>
    <div class="peek"></div>
  </div>
</footer>

<script src="https://cdn.jsdelivr.net/npm/bootstrap@5.3.0/dist/js/bootstrap.bundle.min.js"></script>
<script>
  // Adjust letter spacing so that each label fills its nominal width.
  document.querySelectorAll('.fit[data-w]').forEach(function (el) {
    var natural = el.getBoundingClientRect().width, w = +el.dataset.w;
    el.style.letterSpacing = ((w - natural) / el.textContent.length).toFixed(3) + 'px';
    el.style.width = w + 'px';
  });
</script>
</body>
</html>
